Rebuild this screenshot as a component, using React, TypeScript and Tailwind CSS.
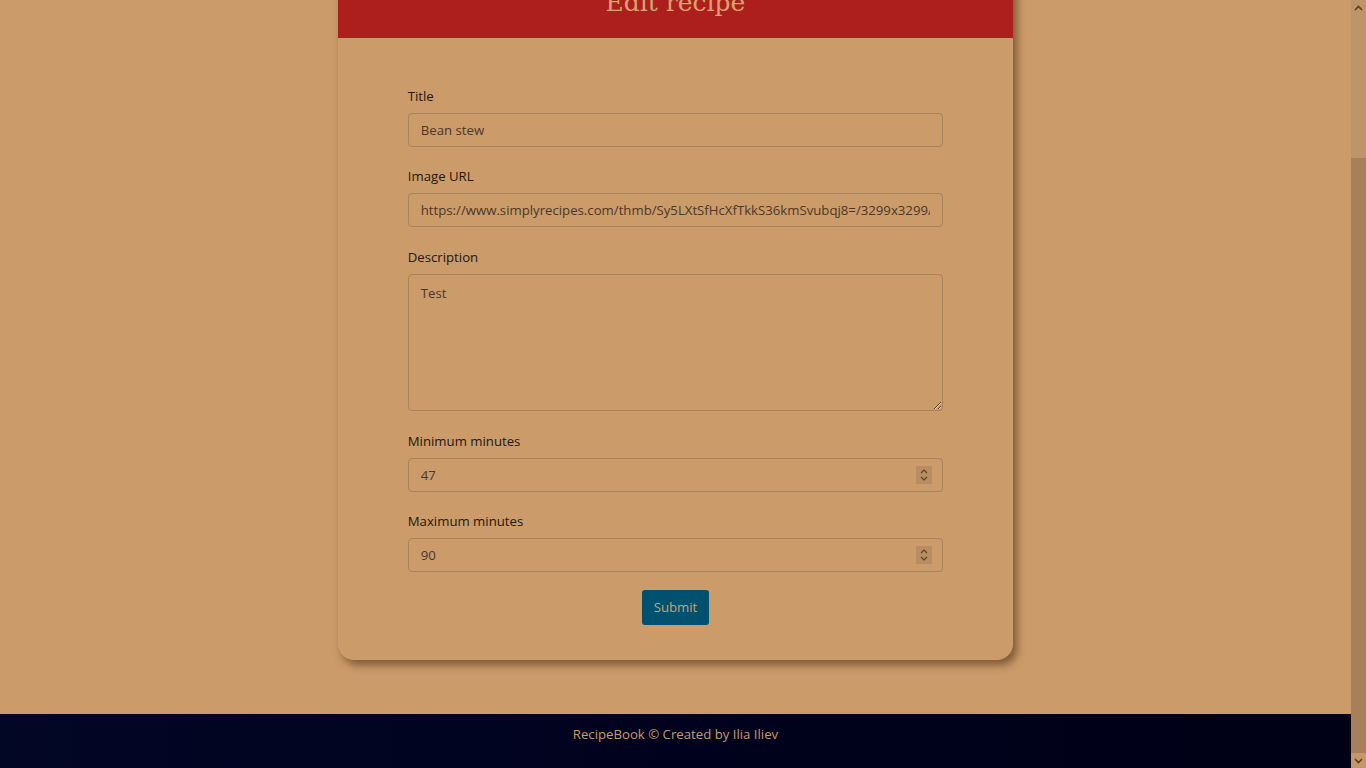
import { useEffect, useRef } from "react";

const sans = "font-['Segoe_UI','Open_Sans','Noto_Sans',sans-serif]";

function Spinner() {
  return (
    <span className="pointer-events-none absolute right-[11px] top-1/2 flex h-[18px] w-[16px] -translate-y-1/2 items-center justify-center bg-[#b98d63]">
      <svg width="8" height="14" viewBox="0 0 8 14" fill="none" stroke="#5b4128" strokeWidth="1.2">
        <path d="M1 5 L4 2 L7 5" />
        <path d="M1 9 L4 12 L7 9" />
      </svg>
    </span>
  );
}

function Field({ label, value, number, loose }: { label: string; value: string; number?: boolean; loose?: boolean }) {
  return (
    <div className={loose ? "mb-[19px]" : "mb-[18px]"}>
      <label className="mb-[6px] block text-[13.2px] leading-[22px] text-[#24170c]">{label}</label>
      <div className="relative">
        <input
          type="text"
          defaultValue={value}
          className="block h-[34px] w-full rounded-[4px] border border-[#a98260] bg-transparent px-3 text-[13.2px] text-[#4a3828] outline-none"
        />
        {number && <Spinner />}
      </div>
    </div>
  );
}

// page scrollbar, drawn because the browser hides its own
function Scrollbar() {
  return (
    <div className="flex w-[15px] shrink-0 flex-col bg-[#c0946a]">
      <div className="flex h-[15px] items-center justify-center">
        <svg width="9" height="6" viewBox="0 0 9 6" fill="none" stroke="#5a3f27" strokeWidth="1.6">
          <path d="M1 5 L4.5 1.5 L8 5" />
        </svg>
      </div>
      <div className="h-[143px]" />
      <div className="flex-1 bg-[#a97f5a]" />
      <div className="flex h-[15px] items-center justify-center bg-[#c69869]">
        <svg width="9" height="6" viewBox="0 0 9 6" fill="none" stroke="#5a3f27" strokeWidth="1.6">
          <path d="M1 1 L4.5 4.5 L8 1" />
        </svg>
      </div>
    </div>
  );
}

export default function App() {
  const scroller = useRef<HTMLDivElement>(null);

  useEffect(() => {
    const el = scroller.current;
    if (el) el.scrollTop = el.scrollHeight;
  }, []);

  return (
    <div className={`flex h-screen bg-[#cc9b6a] ${sans}`}>
      <div ref={scroller} className="min-w-0 flex-1 overflow-y-auto [scrollbar-width:none]">
        <main className="pt-[153px] pb-[54px]">
          <div className="mx-auto w-1/2 overflow-hidden rounded-[16px] bg-[#cc9b6a] shadow-[4px_5px_9px_rgba(60,35,10,0.55)]">
            <div className="flex h-[70px] items-center justify-center bg-[#ad1f1d]">
              <h1 className="font-['DejaVu_Serif','Liberation_Serif',serif] text-[25px] text-[#d9a36f]">Edit recipe</h1>
            </div>
            <form className="px-[70px] pt-[47px] pb-[35px]" onSubmit={(e) => e.preventDefault()}>
              <Field label="Title" value="Bean stew" />
              <Field
                label="Image URL"
                value="https://www.simplyrecipes.com/thmb/Sy5LXtSfHcXfTkkS36kmSvubqj8=/3299x3299/filters:fill(auto,1)/Simply-Recipes-Bean-Stew-LEAD-1.jpg"
                loose
              />
              <div className="mb-[19px]">
                <label className="mb-[6px] block text-[13.2px] leading-[22px] text-[#24170c]">Description</label>
                <textarea
                  defaultValue="Test"
                  className="block h-[137px] w-full rounded-[4px] border border-[#a98260] bg-transparent px-3 py-[9px] text-[13.2px] text-[#4a3828] outline-none"
                />
              </div>
              <Field label="Minimum minutes" value="47" number />
              <Field label="Maximum minutes" value="90" number />
              <div className="flex justify-center">
                <button
                  type="submit"
                  className="h-[35px] rounded-[3px] bg-[#00506f] px-3 text-[13.2px] text-[#d19f6d]"
                >
                  Submit
                </button>
              </div>
            </form>
          </div>
        </main>
        <footer className="h-[54px] bg-gradient-to-r from-[#020725] to-[#000016] pt-[9px] text-center text-[13.2px] leading-[22px] text-[#c89a6a]">
          RecipeBook © Created by Ilia Iliev
        </footer>
      </div>
      <Scrollbar />
    </div>
  );
}
